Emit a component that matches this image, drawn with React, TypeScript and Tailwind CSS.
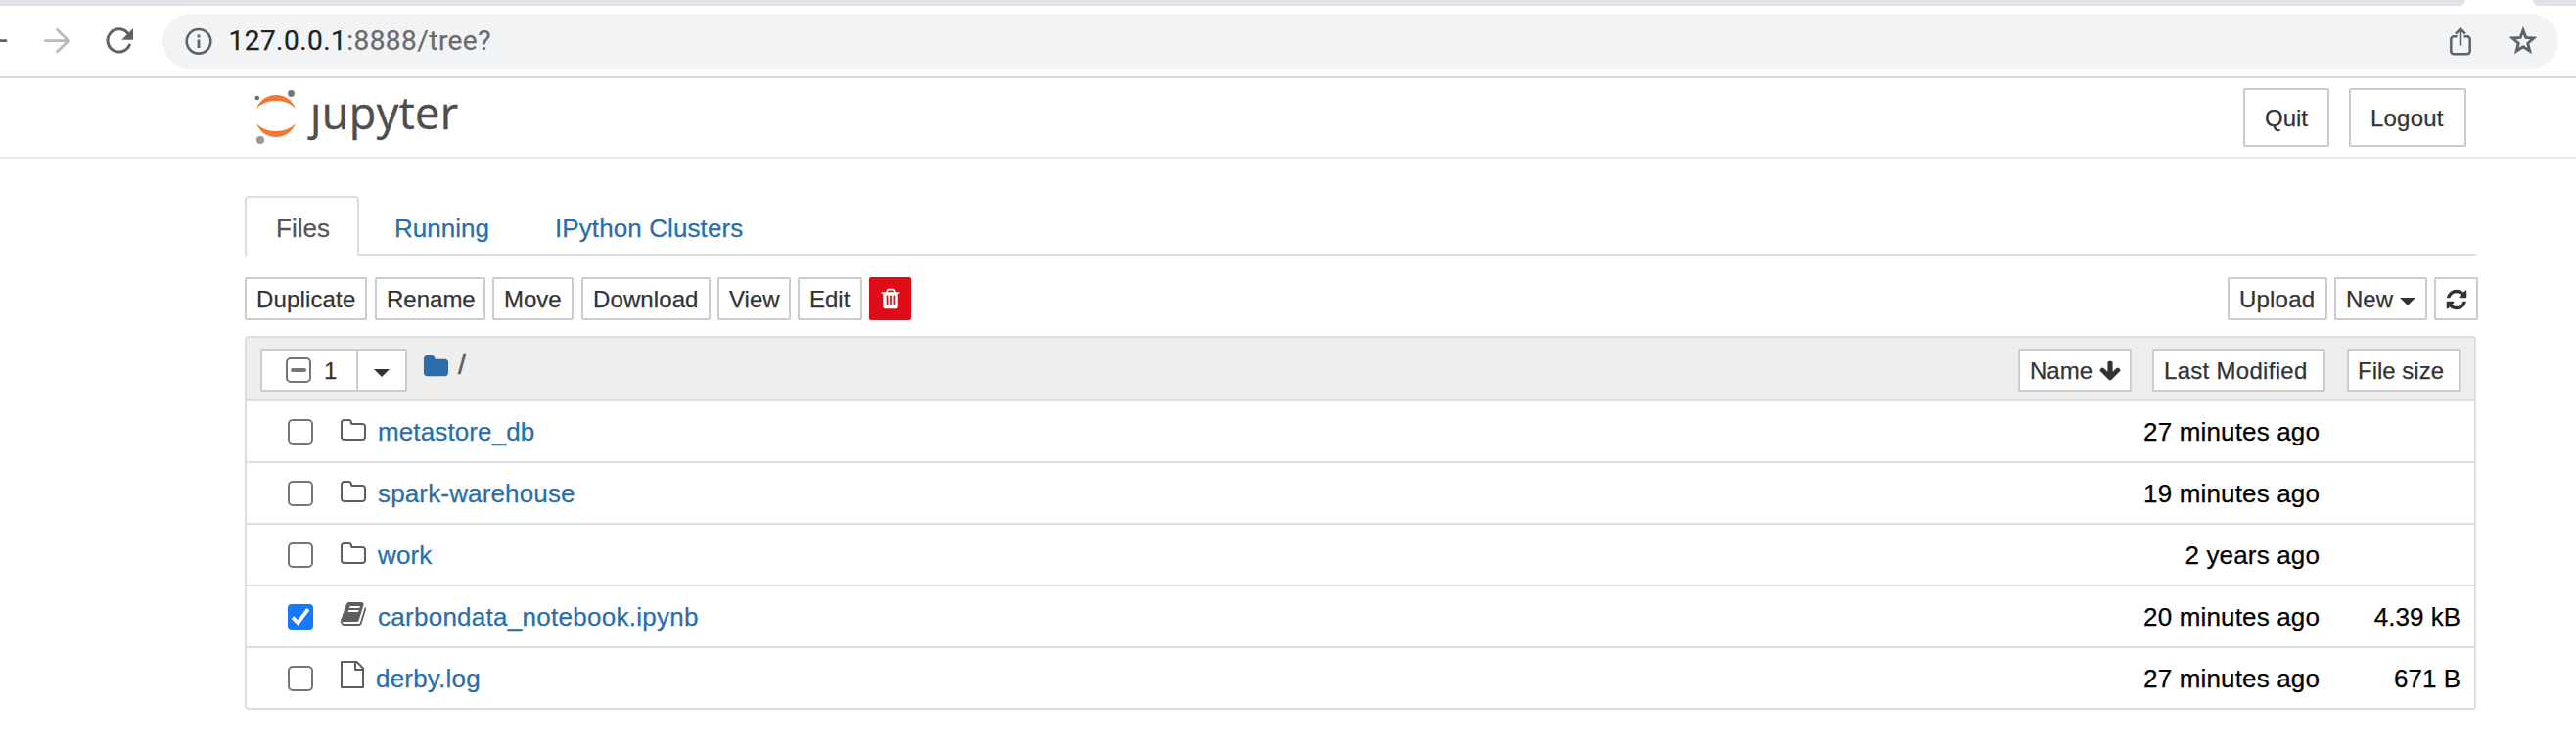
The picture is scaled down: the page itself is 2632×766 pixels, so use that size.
import type { ReactNode } from "react";

const GLYPHS = {
  folder:
    "M1728 608v704q0 92-66 158t-158 66h-1216q-92 0-158-66t-66-158v-960q0-92 66-158t158-66h320q92 0 158 66t66 158v32h672q92 0 158 66t66 158z",
  folderOpen:
    "M1600 1312v-704q0-40-28-68t-68-28h-704q-40 0-68-28t-28-68v-64q0-40-28-68t-68-28h-320q-40 0-68 28t-28 68v960q0 40 28 68t68 28h1216q40 0 68-28t28-68zm128-704v704q0 92-66 158t-158 66h-1216q-92 0-158-66t-66-158v-960q0-92 66-158t158-66h320q92 0 158 66t66 158v32h672q92 0 158 66t66 158z",
  trash:
    "M704 1376v-704q0-14-9-23t-23-9h-64q-14 0-23 9t-9 23v704q0 14 9 23t23 9h64q14 0 23-9t9-23zm256 0v-704q0-14-9-23t-23-9h-64q-14 0-23 9t-9 23v704q0 14 9 23t23 9h64q14 0 23-9t9-23zm256 0v-704q0-14-9-23t-23-9h-64q-14 0-23 9t-9 23v704q0 14 9 23t23 9h64q14 0 23-9t9-23zm-544-992h448l-48-117q-7-9-17-11h-317q-10 2-17 11zm928 32v64q0 14-9 23t-23 9h-96v948q0 83-47 143.5t-113 60.5h-832q-66 0-113-58.5t-47-141.5v-952h-96q-14 0-23-9t-9-23v-64q0-14 9-23t23-9h309l70-167q15-37 54-63t79-26h320q40 0 79 26t54 63l70 167h309q14 0 23 9t9 23z",
  refresh:
    "M1639 1056q0 5-1 7-64 268-268 434.5t-478 166.5q-146 0-282.5-55t-243.5-157l-129 129q-19 19-45 19t-45-19-19-45v-448q0-26 19-45t45-19h448q26 0 45 19t19 45-19 45l-137 137q71 66 161 102t187 36q134 0 250-65t186-179q11-17 53-117 8-23 30-23h192q13 0 22.5 9.5t9.5 22.5zm25-800v448q0 26-19 45t-45 19h-448q-26 0-45-19t-19-45 19-45l138-138q-148-137-349-137-134 0-250 65t-186 179q-11 17-53 117-8 23-30 23h-199q-13 0-22.5-9.5t-9.5-22.5v-7q65-268 270-434.5t480-166.5q146 0 284 55.5t245 156.5l130-129q19-19 45-19t45 19 19 45z",
  arrowDown:
    "M1675 832q0 53-37 90l-651 652q-39 37-91 37-53 0-90-37l-651-652q-38-36-38-90 0-53 38-91l74-75q39-37 91-37 53 0 90 37l294 294v-704q0-52 38-90t90-38h128q52 0 90 38t38 90v704l294-294q37-37 90-37 52 0 91 37l75 75q37 39 37 91z",
  book: "M1703 478q40 57 18 129l-275 906q-19 64-76.5 107.5t-122.5 43.5h-923q-77 0-148.5-53.5t-99.5-131.5q-24-67-2-127 0-4 3-27t4-37q1-8-3-21.5t-3-19.5q2-11 8-21t16.5-23.5 16.5-23.5q23-38 45-91.5t30-91.5q3-10 .5-30t-.5-28q3-11 17-28t17-23q21-36 42-92t25-90q1-9-2.5-32t.5-28q4-13 22-30.5t22-22.5q19-26 42.5-84.5t27.5-96.5q1-8-3-25.5t-2-26.5q2-8 9-18t18-23 17-21q8-12 16.5-30.5t15-35 16-36 19.5-32 26.5-23.5 36-11.5 47.5 5.5l-1 3q38-9 51-9h761q74 0 114 56t18 130l-274 906q-36 119-71.5 153.5t-128.5 34.5h-869q-27 0-38 15-11 16-1 43 24 70 144 70h923q29 0 56-15.5t35-41.5l300-987q7-22 5-57 38 15 59 43zm-1064 2q-4 13 2 22.5t20 9.5h608q13 0 25.5-9.5t16.5-22.5l21-64q4-13-2-22.5t-20-9.5h-608q-13 0-25.5 9.5t-16.5 22.5zm-83 256q-4 13 2 22.5t20 9.5h608q13 0 25.5-9.5t16.5-22.5l21-64q4-13-2-22.5t-20-9.5h-608q-13 0-25.5 9.5t-16.5 22.5z",
};

function Glyph({ name, className }: { name: keyof typeof GLYPHS; className: string }) {
  return (
    <svg viewBox="0 0 1792 1792" fill="currentColor" className={`shrink-0 ${className}`}>
      <path d={GLYPHS[name]} />
    </svg>
  );
}

function Caret() {
  return (
    <svg viewBox="0 0 16 8" fill="currentColor" className="h-2 w-4 shrink-0">
      <path d="M0 0h16L8 8z" />
    </svg>
  );
}

function Button({ className, children }: { className: string; children: ReactNode }) {
  return (
    <button
      className={`flex h-11 shrink-0 items-center whitespace-nowrap rounded-[2px] border-2 border-[#ccc] bg-white pt-px text-2xl leading-none text-[#333] ${className}`}
    >
      {children}
    </button>
  );
}

function BrowserBar() {
  return (
    <div className="h-20 border-b-2 border-[#dadada] bg-white">
      <div className="flex h-[6px] justify-between">
        <div className="w-[2519px] rounded-br-[12px] bg-[#dee1e6]" />
        <div className="w-[44px] rounded-bl-[12px] bg-[#dee1e6]" />
      </div>
      <div className="flex pt-2">
        <svg width="166" height="56" viewBox="0 0 166 56" fill="none" strokeLinecap="round" className="shrink-0">
          <path d="M-6 27.7H6" stroke="#5f6368" strokeWidth="2.8" />
          <path d="M46.5 27.7h23M58.5 16.5 70 27.7 58.5 38.7" stroke="#bababc" strokeWidth="2.8" />
          <path d="M132.3 32A11.6 11.6 0 1 1 130.5 20" stroke="#5f6368" strokeWidth="3" />
          <path d="M136 15v11.7h-11.7z" fill="#5f6368" />
        </svg>
        <div className="flex h-14 w-[2448px] items-center rounded-full bg-[#f1f3f4]">
          <svg viewBox="0 0 28 28" className="ml-[22.5px] size-7" fill="none" stroke="#5f6368">
            <circle cx="14" cy="14.3" r="12.3" strokeWidth="2.6" />
            <path d="M14 12.6v8.4M14 7.6v2.8" strokeWidth="2.8" />
          </svg>
          <span className="ml-[17px] pb-px font-['Roboto',sans-serif] text-[28px] leading-none tracking-[0.46px] text-[#202124]">
            127.0.0.1<span className="text-[#696b6e]">:8888/tree?</span>
          </span>
          <svg viewBox="0 0 22 30" className="ml-auto h-[30px] w-[22px]" fill="none" stroke="#5f6368" strokeWidth="2.5">
            <path d="M7.5 10.3H4.3a3 3 0 0 0-3 3v12a3 3 0 0 0 3 3h13.4a3 3 0 0 0 3-3v-12a3 3 0 0 0-3-3h-3.2" />
            <path d="M11 19.5V3M6 7.6 11 2.6l5 5" />
          </svg>
          <svg viewBox="0 0 29 29" className="ml-[38px] mr-[21.5px] size-[30px]" fill="none" stroke="#5f6368" strokeWidth="2.8">
            <path d="m14.5 4 2.7 7 7.800.6-5.900 5 1.900 7.600-6.500-4.200-6.500 4.200 1.900-7.600-5.900-5 7.800-.6z" />
          </svg>
        </div>
      </div>
    </div>
  );
}

function Header() {
  return (
    <header className="flex h-[82px] border-b-2 border-[#e7e7e7]">
      <svg viewBox="0 0 44 60" className="ml-[259px] mt-[10px] h-[60px] w-11 shrink-0">
        <path d="M3.3 20.7C6 12.6 14 7 23 7s17 5.6 19.8 13.7C38 15.5 31 13 23 13S8 15.5 3.3 20.7z" fill="#f37733" />
        <path d="M3.3 36.3C6 44.4 14 50 23 50s17-5.6 19.8-13.7C38 41.5 31 44 23 44S8 41.5 3.3 36.3z" fill="#f37733" />
        <circle cx="3.8" cy="10" r="2.3" fill="#6d6e70" />
        <circle cx="38.5" cy="5.5" r="3.4" fill="#767677" />
        <circle cx="7" cy="53" r="4.1" fill="#989798" />
      </svg>
      <span className="ml-[14px] mt-[9px] font-['Open_Sans',sans-serif] text-[45px] leading-[52px] tracking-[0.4px] text-[#4e4e4e] [-webkit-text-stroke:0.4px]">
        ȷupyter
      </span>
      <div className="ml-auto mr-[112px] mt-[10px] flex gap-5">
        <Button className="h-[60px] w-[88px] pl-[20px]">Quit</Button>
        <Button className="h-[60px] w-[120px] pl-[20px] tracking-[0.2px]">Logout</Button>
      </div>
    </header>
  );
}

function Tabs() {
  return (
    <nav className="flex h-[61px] border-b-2 border-[#ddd] text-[26px] leading-none text-[#296eaa]">
      <div className="-mb-0.5 flex h-[61px] w-[117px] items-center rounded-t-[4px] border-2 border-b-0 border-[#ddd] bg-white pl-[30px] pt-[3px] text-[#555]">
        Files
      </div>
      <div className="ml-[36px] flex h-[61px] w-[164px] items-center pt-[4px]">Running</div>
      <div className="flex h-[61px] items-center pt-[4px] tracking-[0.1px]">IPython Clusters</div>
    </nav>
  );
}

function Toolbar() {
  return (
    <div className="-mr-0.5 mt-[22px] flex h-11">
      <Button className="w-[125px] pl-[10px] tracking-[0.15px]">Duplicate</Button>
      <Button className="ml-2 w-[113px] pl-[10px]">Rename</Button>
      <Button className="ml-[7px] w-[83px] pl-[10px]">Move</Button>
      <Button className="ml-2 w-[132px] pl-[10px] tracking-[0.1px]">Download</Button>
      <Button className="ml-[7px] w-[75px] pl-[10px]">View</Button>
      <Button className="ml-[7px] w-[66px] pl-[10px]">Edit</Button>
      <button className="ml-[7px] flex h-11 w-[43px] items-center justify-center rounded-[2px] bg-[#df0d17] text-white">
        <Glyph name="trash" className="size-6" />
      </button>
      <Button className="ml-auto w-[102px] pl-[10px] tracking-[0.2px]">Upload</Button>
      <Button className="ml-[7px] w-[95px] pl-[10px]">
        New
        <span className="ml-[7px] mt-[5px]">
          <Caret />
        </span>
      </Button>
      <Button className="ml-[7px] w-[45px] pl-[9px]">
        <Glyph name="refresh" className="size-6" />
      </Button>
    </div>
  );
}

function Checkbox({ state }: { state: "on" | "off" | "mixed" }) {
  if (state === "on") {
    return (
      <span className="size-[26px] shrink-0 rounded-[4px] bg-[#1677ff]">
        <svg viewBox="0 0 26 26" fill="none" stroke="#fff" strokeWidth="3.8">
          <path d="m5 13.6 5.5 5.4L20.8 5.200" />
        </svg>
      </span>
    );
  }
  return (
    <span className="flex size-[26px] shrink-0 items-center justify-center rounded-[5px] border-2 border-[#767676] bg-white">
      {state === "mixed" && <span className="h-1 w-4 rounded-full bg-[#767676]" />}
    </span>
  );
}

function FileIcon() {
  return (
    <svg viewBox="0 0 24 28" className="mb-[7px] h-7 w-6 shrink-0" fill="none" stroke="currentColor" strokeWidth="2">
      <path d="M1 1h15.5L23 7.5V27H1zM15 1v8h8" strokeLinejoin="round" />
    </svg>
  );
}

type Entry = { name: string; kind: "folder" | "notebook" | "file"; modified: string; size: string; style: string };

const ENTRIES: Entry[] = [
  { name: "metastore_db", kind: "folder", modified: "27 minutes ago", size: "", style: "ml-[12px] tracking-[0.12px]" },
  { name: "spark-warehouse", kind: "folder", modified: "19 minutes ago", size: "", style: "ml-[12px] tracking-[0.15px]" },
  { name: "work", kind: "folder", modified: "2 years ago", size: "", style: "ml-[12px] tracking-[0.15px]" },
  { name: "carbondata_notebook.ipynb", kind: "notebook", modified: "20 minutes ago", size: "4.39 kB", style: "ml-[12px] tracking-[0.27px]" },
  { name: "derby.log", kind: "file", modified: "27 minutes ago", size: "671 B", style: "ml-[12px] tracking-[0.2px]" },
];

function Row({ entry }: { entry: Entry }) {
  return (
    <div className="flex h-[63px] items-center border-t-2 border-[#ddd] pl-[42px] pr-[14px] text-[26px] leading-none">
      <span className="mt-px flex">
        <Checkbox state={entry.kind === "notebook" ? "on" : "off"} />
      </span>
      <span className="ml-[28px] flex items-center text-[#5e5e5e]">
        {entry.kind === "folder" && <Glyph name="folderOpen" className="-ml-px -mr-px mb-[1px] size-7" />}
        {entry.kind === "notebook" && <Glyph name="book" className="-ml-px -mr-px mb-[6px] size-7" />}
        {entry.kind === "file" && <FileIcon />}
      </span>
      <span className={`text-[#296eaa] ${entry.style}`}>{entry.name}</span>
      <span className="ml-auto tracking-[0.15px] text-black">{entry.modified}</span>
      <span className="w-[144px] text-right text-black">{entry.size}</span>
    </div>
  );
}

function FileList() {
  return (
    <div className="mt-4 rounded-[4px] border-2 border-[#ddd]">
      <div className="flex h-[63px] bg-[#eee] px-[14px] pt-[11px]">
        <div className="flex h-11 w-[150px] rounded-[2px] border-2 border-[#ccc] bg-white text-2xl leading-none text-[#333]">
          <div className="flex w-[98px] items-center border-r-2 border-[#ccc] pl-6">
            <Checkbox state="mixed" />
            <span className="ml-[13px] pt-px">1</span>
          </div>
          <div className="flex flex-1 items-center justify-center pt-[6px]">
            <Caret />
          </div>
        </div>
        <Glyph name="folder" className="ml-4 mt-[5px] size-[27px] text-[#296eaa]" />
        <span className="ml-[9px] mt-[3px] text-[28px] leading-none text-[#5e5e5e] [-webkit-text-stroke:0.6px]">/</span>
        <Button className="ml-auto w-[116px] pl-[10px]">
          Name
          <Glyph name="arrowDown" className="ml-[6px] size-6" />
        </Button>
        <Button className="ml-[21px] w-[177px] pl-[10px] tracking-[0.3px]">Last Modified</Button>
        <Button className="ml-[22px] w-[116px] pl-[9px]">File size</Button>
      </div>
      {ENTRIES.map((entry) => (
        <Row key={entry.name} entry={entry} />
      ))}
    </div>
  );
}

export default function App() {
  return (
    <div className="h-[766px] w-[2632px] overflow-hidden bg-white font-['Liberation_Sans',Arial,sans-serif] [-webkit-text-stroke:0.25px]">
      <BrowserBar />
      <Header />
      <main className="ml-[250px] mt-[38px] w-[2280px]">
        <Tabs />
        <Toolbar />
        <FileList />
      </main>
    </div>
  );
}
